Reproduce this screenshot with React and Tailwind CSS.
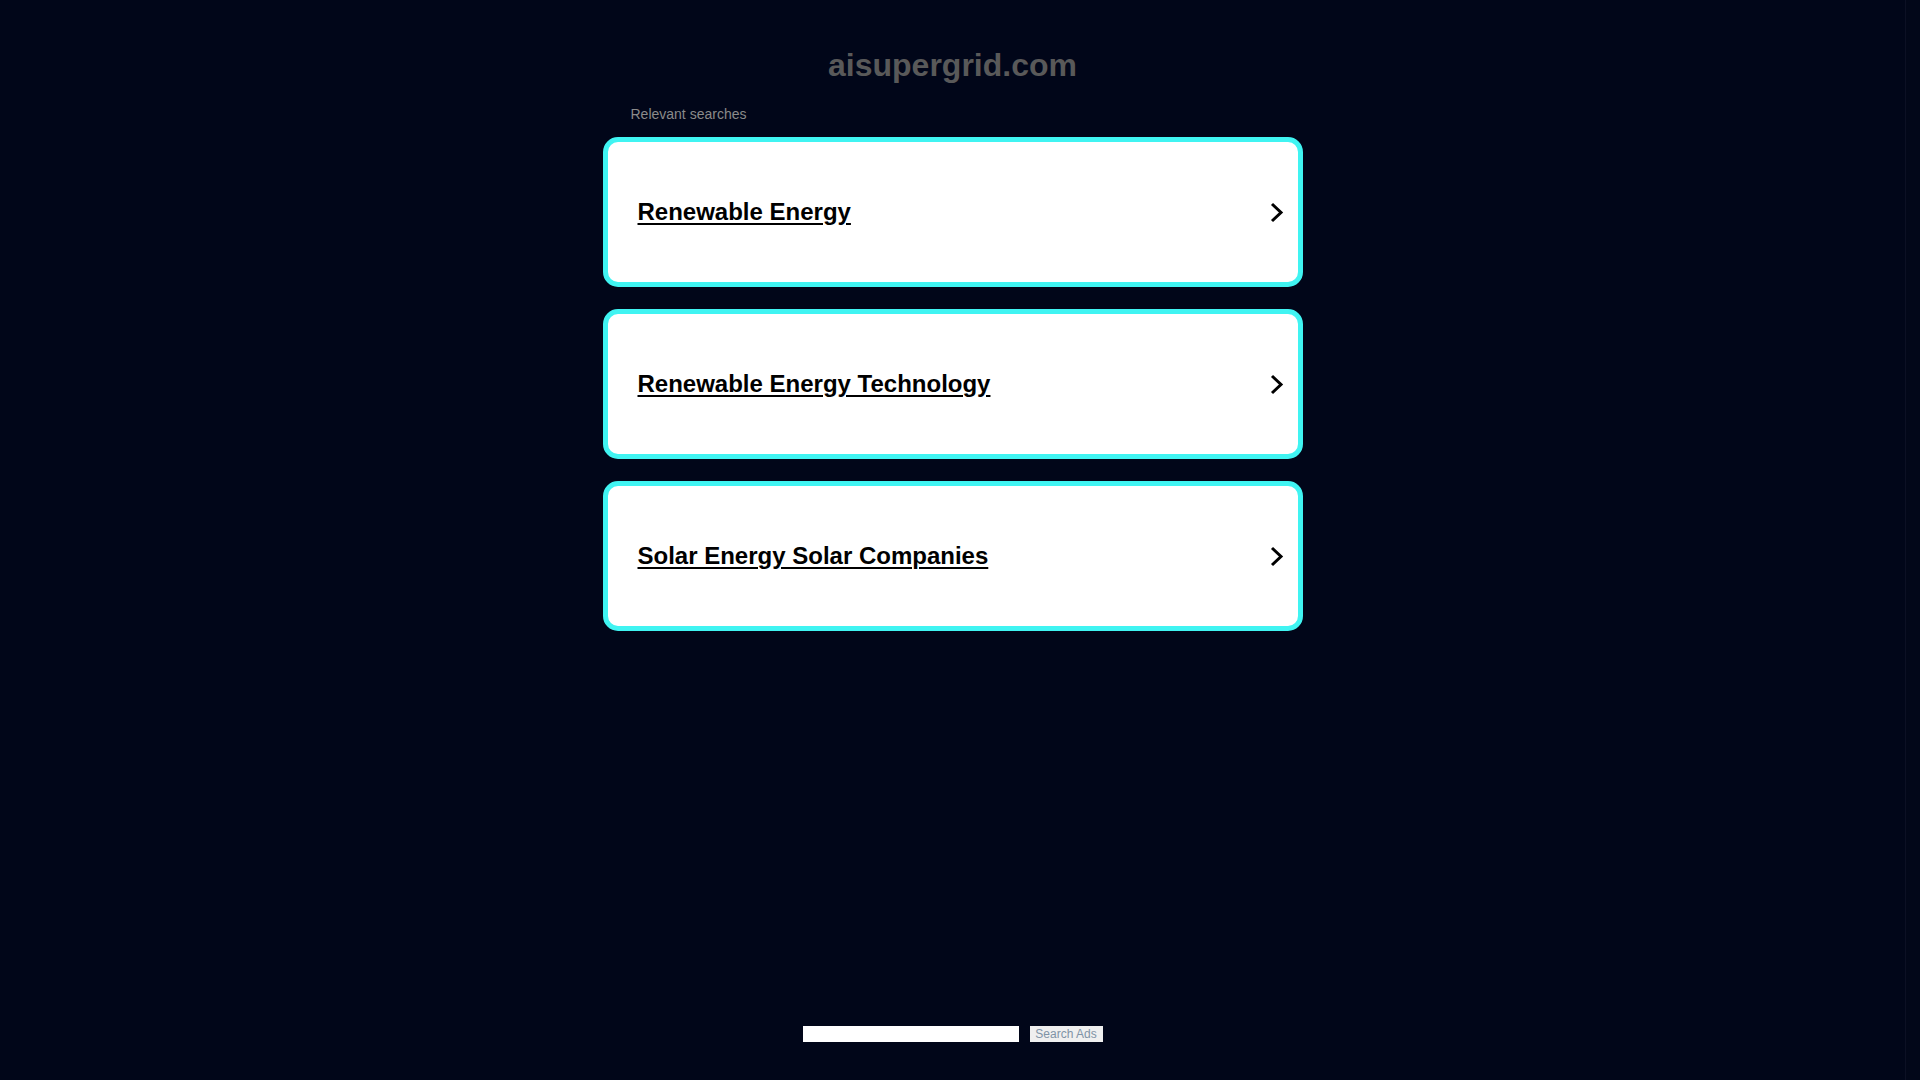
import React from "react";

const items = ["Renewable Energy", "Renewable Energy Technology", "Solar Energy Solar Companies"];

function Chevron() {
  return (
    <svg width="14" height="21" viewBox="0 0 14 21" fill="none">
      <polyline points="2,2 11,10.5 2,19" stroke="#000" strokeWidth="3" strokeLinecap="butt" strokeLinejoin="miter" />
    </svg>
  );
}

export default function App() {
  return (
    <div className="flex h-[1080px] overflow-hidden bg-[#010619] font-['Liberation_Sans',Arial,sans-serif]">
      <div className="flex-1">
        <div className="mx-auto w-[700px] pt-[49px]">
          <h1 className="text-center text-[32px] leading-[32px] font-bold text-[#595959]">aisupergrid.com</h1>
          <div className="mt-[25px] pl-[28px] text-[14px] leading-[16px] text-[#8a8a8a]">Relevant searches</div>
          <div className="mt-[15px] flex flex-col gap-[22px]">
            {items.map((t) => (
              <a
                key={t}
                href="#"
                className="flex h-[150px] items-center justify-between rounded-[15px] border-[5px] border-[#40f4f2] bg-white pl-[30px] pr-[14px]"
              >
                <span className="text-[24px] leading-[24px] font-bold text-black underline decoration-2 underline-offset-[3px]">{t}</span>
                <Chevron />
              </a>
            ))}
          </div>
        </div>
        <div className="mt-[395px] flex justify-center gap-[11px]">
          <input className="h-[16px] w-[216px] border-0 bg-white p-0 outline-none" />
          <button className="h-[16px] w-[73px] bg-[#efefef] p-0 text-[12px] leading-[16px] text-[#7f93a6]">Search Ads</button>
        </div>
      </div>
      <div className="w-[15px] border-l border-[#0c1024] bg-[#020719]" />
    </div>
  );
}
